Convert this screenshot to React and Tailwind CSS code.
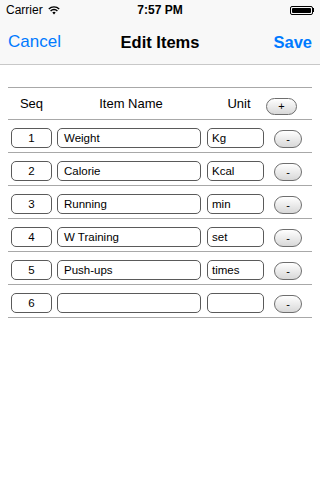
import React from 'react'

const items = [
  { seq: '1', name: 'Weight', unit: 'Kg' },
  { seq: '2', name: 'Calorie', unit: 'Kcal' },
  { seq: '3', name: 'Running', unit: 'min' },
  { seq: '4', name: 'W Training', unit: 'set' },
  { seq: '5', name: 'Push-ups', unit: 'times' },
  { seq: '6', name: '', unit: '' },
]

const font = { fontFamily: '"Liberation Sans", Arial, sans-serif' }

const Field = ({ value, className }) => (
  <div
    className={`h-[20px] rounded-[5px] border border-[#5a5a5a] bg-white text-[11.5px] leading-[18px] text-black ${className}`}
  >
    {value}
  </div>
)

const PillButton = ({ label, className }) => (
  <div
    className={`flex items-center justify-center rounded-full border border-[#6e6e6e] bg-gradient-to-b from-white to-[#d8d8d8] text-[11px] leading-none text-black ${className}`}
  >
    {label}
  </div>
)

const App = () => {
  return (
    <div className="w-[320px] h-[480px] bg-white overflow-hidden" style={font}>
      {/* status bar + nav */}
      <div className="bg-[#f8f8f8] border-b border-[#c8c8c8]">
        <div className="relative h-[20px] flex items-center px-[6px] text-[12px] text-black">
          <span>Carrier</span>
          <svg className="ml-[5px]" width="12" height="9" viewBox="0 0 12 9">
            <path d="M6 8.5 L4.3 6.6 A2.5 2.5 0 0 1 7.7 6.6 Z" fill="#000" />
            <path d="M2.6 4.9 A4.8 4.8 0 0 1 9.4 4.9" stroke="#000" strokeWidth="1.4" fill="none" />
            <path d="M0.8 3 A7.4 7.4 0 0 1 11.2 3" stroke="#000" strokeWidth="1.4" fill="none" />
          </svg>
          <span className="absolute left-0 right-0 text-center font-bold pointer-events-none">7:57 PM</span>
          <div className="ml-auto flex items-center">
            <div className="w-[23px] h-[9px] rounded-[2px] border border-[#000] p-[1px]">
              <div className="w-full h-full bg-black rounded-[1px]" />
            </div>
            <div className="w-[1.5px] h-[4px] bg-black" />
          </div>
        </div>
        <div className="relative h-[44px] flex items-center justify-between px-[8px]">
          <span className="text-[17px] text-[#007aff]">Cancel</span>
          <span className="absolute left-0 right-0 text-center text-[16.5px] font-bold text-black pointer-events-none">
            Edit Items
          </span>
          <span className="text-[16.5px] font-bold text-[#007aff]">Save</span>
        </div>
      </div>

      {/* table */}
      <div className="mx-[8px] mt-[22px] border-t border-[#a8a8a8]">
        <div className="h-[32px] flex items-center text-[13px] text-black border-b border-[#a8a8a8]">
          <div className="w-[47px] text-center">Seq</div>
          <div className="w-[152px] text-center">Item Name</div>
          <div className="w-[64px] text-center">Unit</div>
          <PillButton label="+" className="ml-[-5px] mt-[6px] w-[31px] h-[17px]" />
        </div>
        {items.map((it) => (
          <div key={it.seq} className="h-[33px] flex items-end pb-[4px] border-b border-[#a8a8a8]">
            <Field value={it.seq} className="ml-[3px] w-[41px] text-center" />
            <Field value={it.name} className="ml-[5px] w-[144px] pl-[6px]" />
            <Field value={it.unit} className="ml-[6px] w-[57px] pl-[4px]" />
            <PillButton label="-" className="ml-[10px] w-[28px] h-[18px]" />
          </div>
        ))}
      </div>
    </div>
  )
}

export default App
